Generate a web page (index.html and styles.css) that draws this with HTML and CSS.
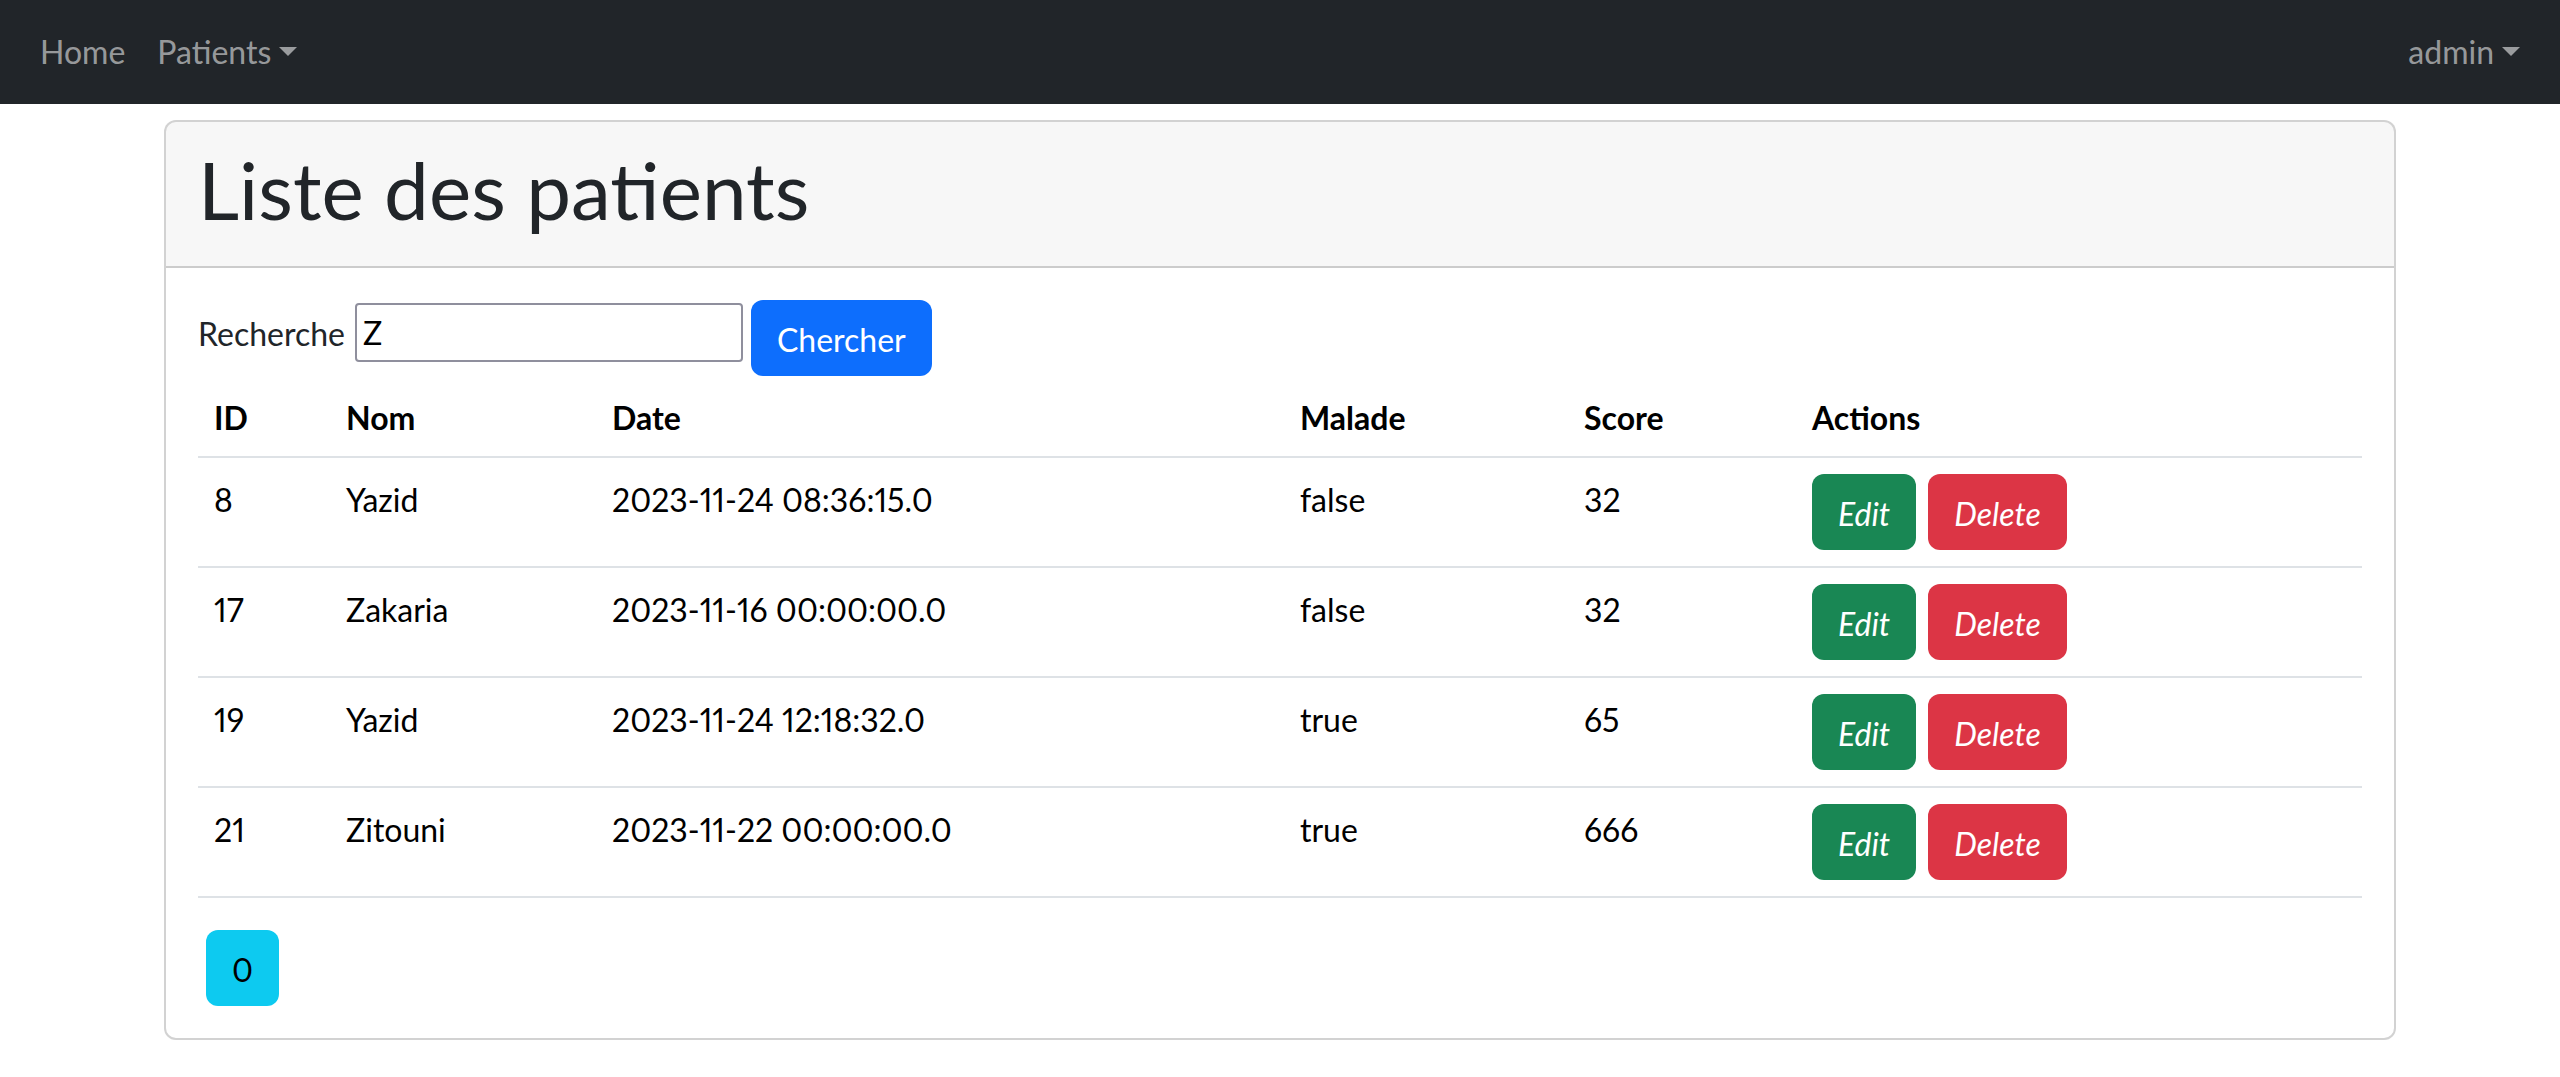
FILE: index.html
```html
<!DOCTYPE html>
<html lang="fr">
<head>
<meta charset="utf-8">
<title>Liste des patients</title>
<link rel="stylesheet" href="styles.css">
</head>
<body>
<nav class="navbar">
  <div class="nav-group">
    <a class="nav-link" href="#">Home</a>
    <a class="nav-link caret" href="#">Patients</a>
  </div>
  <div class="nav-group">
    <a class="nav-link caret" href="#">admin</a>
  </div>
</nav>
<div class="container">
  <div class="card">
    <div class="card-header">
      <h1 class="title">Liste des patients</h1>
    </div>
    <div class="card-body">
      <form class="search">
        <label class="search-label">Recherche</label>
        <input class="search-input" type="text" value="Z">
        <button class="btn btn-primary" type="button">Chercher</button>
      </form>
      <table class="table">
        <thead>
          <tr>
            <th class="c-id">ID</th>
            <th class="c-nom">Nom</th>
            <th class="c-date">Date</th>
            <th class="c-malade">Malade</th>
            <th class="c-score">Score</th>
            <th class="c-actions">Actions</th>
          </tr>
        </thead>
        <tbody>
          <tr>
            <td>8</td><td>Yazid</td><td>2023-11-24 08:36:15.0</td><td>false</td><td>32</td>
            <td class="cell-actions"><div class="actions"><a class="btn btn-success" href="#">Edit</a><a class="btn btn-danger" href="#">Delete</a></div></td>
          </tr>
          <tr>
            <td>17</td><td>Zakaria</td><td>2023-11-16 00:00:00.0</td><td>false</td><td>32</td>
            <td class="cell-actions"><div class="actions"><a class="btn btn-success" href="#">Edit</a><a class="btn btn-danger" href="#">Delete</a></div></td>
          </tr>
          <tr>
            <td>19</td><td>Yazid</td><td>2023-11-24 12:18:32.0</td><td>true</td><td>65</td>
            <td class="cell-actions"><div class="actions"><a class="btn btn-success" href="#">Edit</a><a class="btn btn-danger" href="#">Delete</a></div></td>
          </tr>
          <tr>
            <td>21</td><td>Zitouni</td><td>2023-11-22 00:00:00.0</td><td>true</td><td>666</td>
            <td class="cell-actions"><div class="actions"><a class="btn btn-success" href="#">Edit</a><a class="btn btn-danger" href="#">Delete</a></div></td>
          </tr>
        </tbody>
      </table>
      <ul class="pagination">
        <li><a class="btn btn-info" href="#">0</a></li>
      </ul>
    </div>
  </div>
</div>
</body>
</html>
```
FILE: styles.css
```css
* { box-sizing: border-box; }
html, body { margin: 0; }
body {
  font-family: Lato, "Open Sans", sans-serif;
  font-size: 32px;
  line-height: 1.5;
  font-variant-numeric: proportional-nums;
  color: #212529;
  background: #fff;
}
.navbar {
  height: 104px;
  background: #212529;
  display: flex;
  align-items: center;
  justify-content: space-between;
  padding: 0 24px;
}
.nav-group { display: flex; }
.nav-link {
  color: rgba(255, 255, 255, 0.55);
  text-decoration: none;
  padding: 0 16px;
  line-height: 48px;
}
.caret::after {
  content: "";
  display: inline-block;
  margin-left: 8px;
  vertical-align: 8px;
  border-top: 9px solid;
  border-left: 9px solid transparent;
  border-right: 9px solid transparent;
}
.container {
  width: 2280px;
  margin: 16px auto 0;
  padding: 0 24px;
}
.card {
  border: 2px solid rgba(0, 0, 0, 0.175);
  border-radius: 12px;
  background: #fff;
}
.card-header {
  padding: 16px 32px;
  background: rgba(0, 0, 0, 0.03);
  border-bottom: 2px solid rgba(0, 0, 0, 0.175);
  border-radius: 10px 10px 0 0;
}
.title {
  margin: 0 0 13px;
  padding-top: 3px;
  font-size: 80px;
  font-weight: 400;
  line-height: 96px;
}
.card-body { padding: 32px; }
.search {
  display: flex;
  align-items: flex-start;
  margin: 0;
}
.search-label {
  margin-top: 10px;
  line-height: 48px;
}
.search-input {
  width: 388px;
  height: 59px;
  margin: 3px 0 0 10px;
  padding: 0 6px;
  border: 2px solid #8f8f9d;
  border-radius: 4px;
  font-family: inherit;
  font-size: 32px;
  color: #000;
  background: #fff;
}
.search .btn { margin-left: 8px; }
.btn {
  display: inline-block;
  padding: 14px 24px 10px;
  border: 2px solid transparent;
  border-radius: 12px;
  font-family: inherit;
  font-size: 32px;
  line-height: 48px;
  color: #fff;
  text-decoration: none;
  cursor: pointer;
}
.btn-primary { background: #0d6efd; }
.btn-success { background: #198754; font-style: italic; }
.btn-danger { background: #dc3545; font-style: italic; }
.btn-info { background: #0dcaf0; color: #000; margin-left: 8px; }
.table {
  width: 100%;
  border-collapse: collapse;
  table-layout: fixed;
  color: #000;
  margin-bottom: 32px;
}
.table th, .table td {
  padding: 18px 16px 14px;
  border-bottom: 2px solid #dee2e6;
  text-align: left;
  vertical-align: top;
}
.table td.cell-actions { padding: 16px; }
.table th { font-weight: 700; }
.c-id { width: 132px; }
.c-nom { width: 266px; }
.c-date { width: 688px; }
.c-malade { width: 284px; }
.c-score { width: 228px; }
.actions { display: flex; gap: 12px; }
.pagination {
  list-style: none;
  margin: 0;
  padding: 0;
  display: flex;
}
```
